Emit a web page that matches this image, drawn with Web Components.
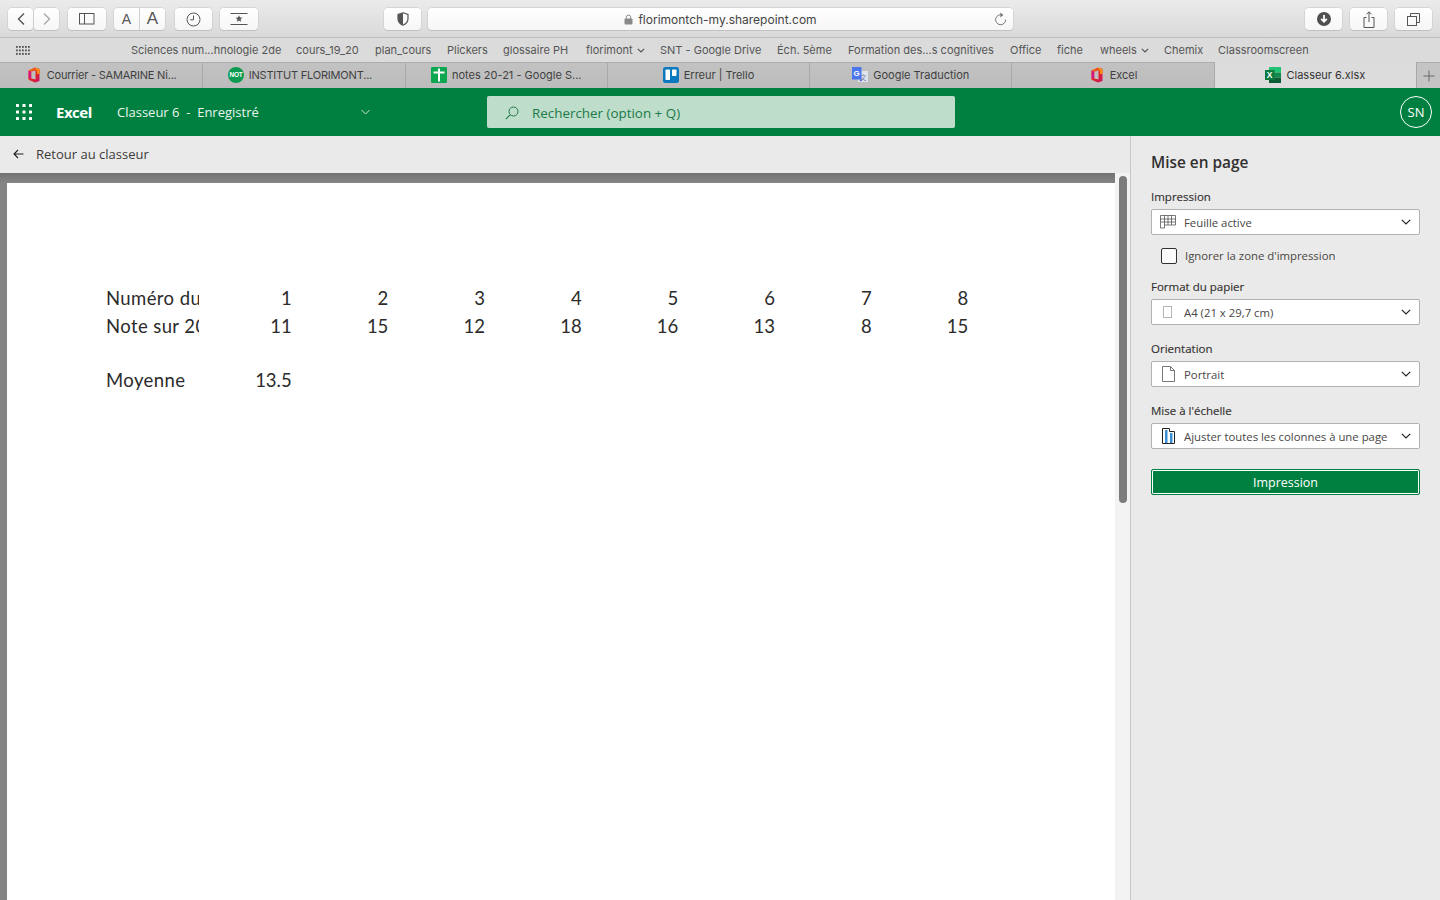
<!DOCTYPE html>
<html lang="fr">
<head>
<meta charset="utf-8">
<title>Classeur 6.xlsx</title>
<style>
html, body { margin: 0; height: 100%; overflow: hidden; background: #ebeaea; }
body { display: flex; flex-direction: column; width: 1440px; height: 900px; }
</style>
</head>
<body>
<safari-toolbar></safari-toolbar>
<bookmark-bar></bookmark-bar>
<tab-strip>
    <browser-tab icon="office" tight>Courrier - SAMARINE Ni...</browser-tab>
    <browser-tab icon="not" tight style="padding-right:8px">INSTITUT FLORIMONT...</browser-tab>
    <browser-tab icon="sheets">notes 20-21 - Google S...</browser-tab>
    <browser-tab icon="trello">Erreur | Trello</browser-tab>
    <browser-tab icon="translate">Google Traduction</browser-tab>
    <browser-tab icon="office">Excel</browser-tab>
    <browser-tab icon="excel" active>Classeur 6.xlsx</browser-tab>
</tab-strip>
<excel-header></excel-header>
<print-view>
    <print-preview></print-preview>
    <layout-panel>
        <panel-select label="Impression" icon="grid">Feuille active</panel-select>
        <panel-check>Ignorer la zone d'impression</panel-check>
        <panel-select label="Format du papier" icon="paper">A4 (21 x 29,7 cm)</panel-select>
        <panel-select label="Orientation" icon="portrait">Portrait</panel-select>
        <panel-select label="Mise à l'échelle" icon="fit">Ajuster toutes les colonnes à une page</panel-select>
    </layout-panel>
</print-view>

<script>
const UI_FONT = '"Open Sans", "Noto Sans", sans-serif';
const MAC_FONT = 'Inter, "Liberation Sans", sans-serif';

class SafariToolbar extends HTMLElement {
    constructor() {
        super();
        this.attachShadow({ mode: 'open' });
    }

    connectedCallback() {
        this.shadowRoot.innerHTML = `
        <style>
        :host {
            display: flex;
            align-items: flex-start;
            box-sizing: border-box;
            height: 38px;
            padding: 8px 8px 0;
            background: linear-gradient(#ebebeb, #d9d9d9);
            border-bottom: 1px solid #bdbdbd;
            font-family: ${MAC_FONT};
        }
        .btn {
            display: flex;
            justify-content: center;
            align-items: center;
            box-sizing: border-box;
            height: 22px;
            background: linear-gradient(#ffffff, #f6f6f6);
            border-radius: 4px;
            box-shadow: 0 0 0 0.5px #c6c6c6, 0 1px 0 #bcbcbc;
            color: #555;
        }
        svg { display: block; fill: none; stroke: #555; }
        .a-small, .a-big { font-family: "Liberation Sans", sans-serif; color: #555; line-height: 22px; text-align: center; flex: 1; }
        .a-small { font-size: 14px; border-right: 1px solid #d0d0d0; }
        .a-big { font-size: 17px; }
        .address {
            position: relative;
            justify-content: center;
            width: 585px;
            margin-left: 7px;
            font-size: 12px;
            color: #444;
            gap: 5px;
        }
        .reload { position: absolute; right: 6px; top: 4px; }
        </style>
        <div class="btn" style="width:25px"><svg width="10" height="14" viewBox="0 0 10 14"><path d="M8 1.500 2.500 7 8 12.500" stroke-width="1.400"/></svg></div>
        <div class="btn" style="width:25px;margin-left:1px"><svg width="10" height="14" viewBox="0 0 10 14"><path d="M2 1.500 7.500 7 2 12.500" stroke="#a8a8a8" stroke-width="1.400"/></svg></div>
        <div class="btn" style="width:38px;margin-left:9px"><svg width="16" height="12" viewBox="0 0 16 12"><rect x=".5" y=".5" width="14.500" height="10.500"/><path d="M5.500 .5v10.500"/></svg></div>
        <div class="btn" style="width:51px;margin-left:8px"><span class="a-small">A</span><span class="a-big">A</span></div>
        <div class="btn" style="width:37px;margin-left:10px"><svg width="15" height="15" viewBox="0 0 15 15"><circle cx="7.500" cy="7.500" r="6.500"/><path d="M7.500 3.500v4.300H4.200"/></svg></div>
        <div class="btn" style="width:38px;margin-left:8px"><svg width="18" height="12" viewBox="0 0 18 12"><path d="M.5 .5h17M.5 11.500h17"/><path d="m9 2.200 1 2.300 2.500.2-1.900 1.600.6 2.400L9 7.500 6.800 8.700l.6-2.400-1.900-1.600L8 4.500Z" fill="#555" stroke="none"/></svg></div>
        <div class="btn" style="width:37px;margin-left:126px"><svg width="12" height="14" viewBox="0 0 12 14"><path d="M6 .8 11 2.500v4c0 3.200-2 5.500-5 6.800C3 12 1 9.700 1 6.500v-4Z" stroke-width="1.200"/><path d="M6 .8v12.500C3 12 1 9.700 1 6.500v-4Z" fill="#555" stroke="none"/></svg></div>
        <div class="btn address">
            <svg width="9" height="11" viewBox="0 0 9 11"><path d="M2.300 5V3.300a2.200 2.200 0 0 1 4.400 0V5" stroke="#8a8a8a"/><rect x=".5" y="4.500" width="8" height="6" rx="1" fill="#8a8a8a" stroke="none"/></svg>
            <span>florimontch-my.sharepoint.com</span>
            <svg class="reload" width="13" height="14" viewBox="0 0 13 14"><path d="M8.500 3.100A5 5 0 1 0 11.600 7.500" stroke="#777"/><path d="M6.300 .6 9.300 3 6.300 5.400Z" fill="#777" stroke="none"/></svg>
        </div>
        <div class="btn" style="width:37px;margin-left:292px"><svg width="14" height="14" viewBox="0 0 14 14"><circle cx="7" cy="7" r="7" fill="#4f4f4f" stroke="none"/><path d="M7 3v5.500M4.200 6.800 7 9.800l2.800-3" stroke="#fff" stroke-width="1.800"/></svg></div>
        <div class="btn" style="width:37px;margin-left:8px"><svg width="12" height="17" viewBox="0 0 12 17"><path d="M3.500 6.500H1v10h10v-10H8.500M6 11V1M3.500 3.300 6 .8l2.500 2.500"/></svg></div>
        <div class="btn" style="width:37px;margin-left:8px"><svg width="13" height="13" viewBox="0 0 13 13"><rect x=".5" y="3.500" width="9" height="9"/><path d="M3.500 3.500v-3h9v9h-3"/></svg></div>
        `;
    }
}

class BookmarkBar extends HTMLElement {
    constructor() {
        super();
        this.attachShadow({ mode: 'open' });
    }

    connectedCallback() {
        const items = [
            ['Sciences num...hnologie 2de', 131], ['cours_19_20', 296], ['plan_cours', 375],
            ['Plickers', 447], ['glossaire PH', 503], ['florimont', 586, true],
            ['SNT - Google Drive', 660], ['Éch. 5ème', 777], ['Formation des...s cognitives', 848],
            ['Office', 1010], ['fiche', 1057], ['wheels', 1100, true], ['Chemix', 1164], ['Classroomscreen', 1218]
        ];
        const links = items.map(([name, x, menu], i) => {
            const next = items[i + 1] ? items[i + 1][1] : x + 100;
            const chevron = menu ? '<svg width="8" height="5" viewBox="0 0 8 5"><path d="M.8 .8 4 4 7.200 .8" fill="none" stroke="#555" stroke-width="1.200"/></svg>' : '';
            return `<a style="width:${next - x}px">${name}${chevron}</a>`;
        }).join('');
        let dots = '';
        for (let r = 0; r < 3; r++) {
            for (let c = 0; c < 5; c++) {
                dots += `<rect x="${c * 3}" y="${r * 3.500}" width="1.800" height="1.800"/>`;
            }
        }
        this.shadowRoot.innerHTML = `
        <style>
        :host {
            display: flex;
            align-items: center;
            box-sizing: border-box;
            height: 24px;
            padding-left: 16px;
            background: #dbdbdb;
            font: 11px ${MAC_FONT};
            color: #555;
            white-space: nowrap;
        }
        .apps { width: 115px; flex: none; fill: #555; }
        a { display: flex; align-items: center; gap: 4px; flex: none; }
        </style>
        <svg class="apps" height="9" viewBox="0 0 115 9" preserveAspectRatio="xMinYMid meet">${dots}</svg>
        ${links}
        `;
    }
}

class TabStrip extends HTMLElement {
    constructor() {
        super();
        this.attachShadow({ mode: 'open' });
    }

    connectedCallback() {
        this.shadowRoot.innerHTML = `
        <style>
        :host {
            display: flex;
            box-sizing: border-box;
            height: 26px;
            background: #bfbfbf;
            border-top: 1px solid #adadad;
        }
        .tabs { display: grid; grid-template-columns: repeat(7, 1fr); width: 1416px; }
        .plus {
            flex: 1;
            display: flex;
            align-items: center;
            justify-content: center;
            background: #c4c4c4;
            border-left: 1px solid #a9a9a9;
        }
        </style>
        <div class="tabs"><slot></slot></div>
        <div class="plus"><svg width="12" height="12" viewBox="0 0 12 12"><path d="M6 .5v11M.5 6h11" stroke="#6a6a6a" fill="none"/></svg></div>
        `;
    }
}

const FAVICONS = {
    office: `<svg width="16" height="16" viewBox="0 0 16 16"><defs><linearGradient id="o" x1="0" y1="0" x2="1" y2="1"><stop offset="0" stop-color="#f7941d"/><stop offset=".5" stop-color="#e3231f"/><stop offset="1" stop-color="#c81270"/></linearGradient></defs><path d="M2.500 3.300 9 .5l4.500 1.500v12L9 15.500 2.500 12.800Z M5.200 4.700v6.800L9.500 12.500V3.600Z" fill="url(#o)" fill-rule="evenodd"/><path d="M9.500 .7 13.500 2v5H11V3.300L9.500 3.600Z" fill="#f98e12"/><path d="M2.500 3.300 5.200 4.700v6.800H2.500Z" fill="#d6177d"/></svg>`,
    not: `<svg width="16" height="16" viewBox="0 0 16 16"><circle cx="8" cy="8" r="8" fill="#0b9a4f"/><text x="8" y="10.300" font-size="6.500" font-weight="700" text-anchor="middle" fill="#fff" font-family="Liberation Sans">NOT</text></svg>`,
    sheets: `<svg width="16" height="16" viewBox="0 0 16 16"><rect width="16" height="16" rx="1" fill="#0ca750"/><path d="M2.500 4.500h11v2h-4.500v8h-2v-8h-4.500Z M7 1.500h2v3h-2Z" fill="#fff"/></svg>`,
    trello: `<svg width="16" height="16" viewBox="0 0 16 16"><rect width="16" height="16" rx="2.500" fill="#0a79bf"/><rect x="2.500" y="2.500" width="4.500" height="10.500" rx=".7" fill="#fff"/><rect x="9" y="2.500" width="4.500" height="6.500" rx=".7" fill="#fff"/></svg>`,
    translate: `<svg width="16" height="16" viewBox="0 0 16 16"><rect x="6" y="4" width="10" height="11" fill="#dfe3ea"/><text x="11" y="12.500" font-size="7" text-anchor="middle" fill="#7c8aa8" font-family="Noto Sans CJK SC">文</text><path d="M0 0h9.500v12.500H0Z" fill="#4a76ee"/><path d="M7.500 12.500h3l-2 2Z" fill="#3b4fc8"/><text x="4.700" y="9" font-size="8" font-weight="700" text-anchor="middle" fill="#fff" font-family="Liberation Sans">G</text></svg>`,
    excel: `<svg width="16" height="16" viewBox="0 0 16 16"><rect x="4" y="0" width="12" height="5.500" fill="#21c372"/><rect x="4" y="5.500" width="12" height="5" fill="#0f8a4a"/><rect x="4" y="10.500" width="12" height="5.500" fill="#0b5e33"/><rect x="0" y="3" width="9.500" height="10" fill="#0b7a3e"/><text x="4.700" y="11" font-size="8.500" font-weight="700" text-anchor="middle" fill="#fff" font-family="Liberation Sans">X</text></svg>`
};

class BrowserTab extends HTMLElement {
    constructor() {
        super();
        this.attachShadow({ mode: 'open' });
    }

    connectedCallback() {
        this.shadowRoot.innerHTML = `
        <style>
        :host {
            display: flex;
            justify-content: center;
            align-items: center;
            gap: 5px;
            box-sizing: border-box;
            min-width: 0;
            padding-bottom: 1px;
            background: linear-gradient(#c2c2c2, #bcbcbc);
            border-left: 1px solid #a9a9a9;
            font: 11px ${MAC_FONT};
            color: #3f3f3f;
            white-space: nowrap;
        }
        :host(:first-child) { border-left: 0; }
        :host([tight]) { letter-spacing: -0.2px; }
        :host([active]) {
            background: #dcdcdc;
            color: #333;
            margin-top: -1px;
        }
        svg { display: block; flex: none; }
        </style>
        ${FAVICONS[this.getAttribute('icon')]}
        <slot></slot>
        `;
    }
}

class ExcelHeader extends HTMLElement {
    constructor() {
        super();
        this.attachShadow({ mode: 'open' });
    }

    connectedCallback() {
        let dots = '';
        for (let r = 0; r < 3; r++) {
            for (let c = 0; c < 3; c++) {
                dots += `<rect x="${c * 6.500}" y="${r * 6.500}" width="3" height="3" rx=".5"/>`;
            }
        }
        this.shadowRoot.innerHTML = `
        <style>
        :host {
            display: flex;
            align-items: center;
            flex: none;
            box-sizing: border-box;
            height: 48px;
            padding-left: 16px;
            background: #008040;
            color: #fff;
            font-family: ${UI_FONT};
        }
        .waffle { fill: #fff; flex: none; }
        .brand { margin-left: 24px; font-size: 15px; font-weight: 700; letter-spacing: -0.5px; width: 61px; flex: none; }
        .doc { font-size: 13px; width: 244px; flex: none; white-space: pre; color: #eaf5ee; }
        .chev { flex: none; }
        .search {
            display: flex;
            align-items: center;
            box-sizing: border-box;
            width: 468px;
            height: 32px;
            margin-left: 117px;
            padding: 1px 0 0 18px;
            gap: 13px;
            background: #bfddcb;
            border-radius: 2px;
            color: #1a7a48;
            font-size: 13.400px;
        }
        .avatar {
            display: flex;
            justify-content: center;
            align-items: center;
            box-sizing: border-box;
            width: 32px;
            height: 32px;
            margin-left: auto;
            margin-right: 8px;
            border: 1px solid #fff;
            border-radius: 50%;
            font-size: 13px;
        }
        </style>
        <svg class="waffle" width="16" height="16" viewBox="0 0 16 16">${dots}</svg>
        <span class="brand">Excel</span>
        <span class="doc">Classeur 6  -  Enregistré</span>
        <svg class="chev" width="9" height="6" viewBox="0 0 9 6"><path d="M.5 1 4.500 5 8.500 1" fill="none" stroke="#cfe6d8"/></svg>
        <div class="search">
            <svg width="14" height="14" viewBox="0 0 14 14"><circle cx="8.500" cy="5.500" r="4.500" fill="none" stroke="#1f7a4a"/><path d="M5.200 8.800 .8 13.200" stroke="#1f7a4a" stroke-width="1.100"/></svg>
            <span>Rechercher (option + Q)</span>
        </div>
        <div class="avatar">SN</div>
        `;
    }
}

class PrintView extends HTMLElement {
    constructor() {
        super();
        this.attachShadow({ mode: 'open' });
    }

    connectedCallback() {
        this.shadowRoot.innerHTML = `
        <style>
        :host { display: flex; flex: 1; min-height: 0; }
        </style>
        <slot></slot>
        `;
    }
}

class PrintPreview extends HTMLElement {
    constructor() {
        super();
        this.attachShadow({ mode: 'open' });
    }

    connectedCallback() {
        const numbers = [1, 2, 3, 4, 5, 6, 7, 8];
        const notes = [11, 15, 12, 18, 16, 13, 8, 15];
        const cells = (list) => list.map((v) => `<span class="num">${v}</span>`).join('');
        this.shadowRoot.innerHTML = `
        <style>
        :host {
            display: flex;
            flex-direction: column;
            box-sizing: border-box;
            width: 1131px;
            flex: none;
            border-right: 1px solid #c9c8c7;
            background: #ebeaea;
        }
        .back {
            display: flex;
            align-items: center;
            gap: 12px;
            box-sizing: border-box;
            height: 37px;
            flex: none;
            padding: 0 0 2px 13px;
            font: 13px ${UI_FONT};
            color: #3b3a39;
        }
        .stage { display: flex; flex: 1; min-height: 0; }
        .frame {
            flex: none;
            width: 1115px;
            box-sizing: border-box;
            padding: 10px 0 0 7px;
            background: #7f7f7f;
            background-image: linear-gradient(#737373, #848484 10px);
            overflow: hidden;
        }
        .sheet {
            height: 100%;
            background: #fff;
            padding: 101px 0 0 99px;
            box-sizing: border-box;
            font: 18.500px Lato, Carlito, sans-serif;
            color: #2b2b2b;
        }
        .row {
            display: grid;
            grid-template-columns: 93px 92.700px repeat(7, 96.670px);
            height: 28px;
            line-height: 28px;
        }
        .label { overflow: hidden; white-space: nowrap; letter-spacing: 0.4px; }
        .num { text-align: right; }
        .track { flex: 1; background: #f3f3f3; padding: 3px 3px 0 4px; box-sizing: border-box; }
        .thumb { height: 327px; background: #7c7c7c; border-radius: 4px; }
        </style>
        <div class="back">
            <svg width="11" height="10" viewBox="0 0 11 10"><path d="M10.500 5H1M5 1 1 5l4 4" fill="none" stroke="#201f1e" stroke-width="1.100"/></svg>
            <span>Retour au classeur</span>
        </div>
        <div class="stage">
            <div class="frame">
                <div class="sheet">
                    <div class="row"><span class="label">Numéro du</span>${cells(numbers)}</div>
                    <div class="row"><span class="label">Note sur 20</span>${cells(notes)}</div>
                    <div class="row" style="height:26px"></div>
                    <div class="row"><span class="label">Moyenne</span><span class="num">13.5</span></div>
                </div>
            </div>
            <div class="track"><div class="thumb"></div></div>
        </div>
        `;
    }
}

class LayoutPanel extends HTMLElement {
    constructor() {
        super();
        this.attachShadow({ mode: 'open' });
    }

    connectedCallback() {
        this.shadowRoot.innerHTML = `
        <style>
        :host {
            display: block;
            flex: 1;
            box-sizing: border-box;
            padding: 16px 20px 0 20px;
            background: #ebeaea;
            font-family: ${UI_FONT};
            color: #323130;
        }
        h2 { margin: 0 0 15px; font-size: 15.400px; line-height: 22px; font-weight: 600; }
        button {
            display: block;
            box-sizing: border-box;
            width: 100%;
            height: 26px;
            margin-top: 20px;
            padding: 0;
            background: #008040;
            border: 1px solid #008040;
            border-radius: 2px;
            box-shadow: inset 0 0 0 1px #fff;
            color: #fff;
            font: 12.500px ${UI_FONT};
        }
        </style>
        <h2>Mise en page</h2>
        <slot></slot>
        <button type="button">Impression</button>
        `;
    }
}

const SELECT_ICONS = {
    grid: `<svg width="16" height="14" viewBox="0 0 16 14"><path d="M.5 .5h15v9.500h-11V13H.5ZM.5 4h15M.5 7h15M4.500 .5V10M8 .5V10M11.500 .5V10" fill="none" stroke="#555" stroke-width=".8"/></svg>`,
    paper: `<svg width="10" height="13" viewBox="0 0 10 13"><rect x=".5" y=".5" width="8" height="11" fill="#fff" stroke="#b5b5b5"/></svg>`,
    portrait: `<svg width="13" height="16" viewBox="0 0 13 16"><path d="M.5 .5h8l4 4v11H.5Z M8.500 .5v4h4" fill="#fff" stroke="#777"/></svg>`,
    fit: `<svg width="13" height="16" viewBox="0 0 13 16"><path d="M.5 .5h7v3h5v12H.5Z" fill="#fff" stroke="#222"/><rect x="3" y="2" width="2.500" height="13" fill="#3b8fd4"/><rect x="8" y="5" width="2.500" height="10" fill="#3b8fd4"/></svg>`
};

class PanelSelect extends HTMLElement {
    constructor() {
        super();
        this.attachShadow({ mode: 'open' });
    }

    connectedCallback() {
        this.shadowRoot.innerHTML = `
        <style>
        :host { display: block; margin-bottom: 16px; }
        label { display: block; height: 20px; line-height: 16px; font-size: 11.500px; color: #323130; -webkit-text-stroke: 0.15px #323130; }
        .box {
            display: flex;
            align-items: center;
            box-sizing: border-box;
            height: 26px;
            background: #fff;
            border: 1px solid #b3b0ad;
            border-radius: 2px;
            font-size: 11.350px;
            color: #484644;
        }
        .icon { display: flex; justify-content: center; width: 32px; flex: none; }
        .text { flex: 1; white-space: nowrap; }
        .chev { margin-right: 8px; flex: none; }
        </style>
        <label>${this.getAttribute('label')}</label>
        <div class="box">
            <span class="icon">${SELECT_ICONS[this.getAttribute('icon')]}</span>
            <span class="text"><slot></slot></span>
            <svg class="chev" width="10" height="6" viewBox="0 0 10 6"><path d="M.8 .8 5 5 9.200 .8" fill="none" stroke="#222" stroke-width="1.200"/></svg>
        </div>
        `;
    }
}

class PanelCheck extends HTMLElement {
    constructor() {
        super();
        this.attachShadow({ mode: 'open' });
    }

    connectedCallback() {
        this.shadowRoot.innerHTML = `
        <style>
        :host {
            display: flex;
            align-items: center;
            gap: 8px;
            height: 16px;
            margin: -3px 0 15px 10px;
            font-size: 11.350px;
            color: #484644;
        }
        .box { width: 16px; height: 16px; box-sizing: border-box; border: 1px solid #323130; border-radius: 2px; background: #fbfbfb; }
        .text { margin-top: -2px; }
        </style>
        <span class="box"></span>
        <span class="text"><slot></slot></span>
        `;
    }
}

customElements.define('safari-toolbar', SafariToolbar);
customElements.define('bookmark-bar', BookmarkBar);
customElements.define('tab-strip', TabStrip);
customElements.define('browser-tab', BrowserTab);
customElements.define('excel-header', ExcelHeader);
customElements.define('print-view', PrintView);
customElements.define('print-preview', PrintPreview);
customElements.define('layout-panel', LayoutPanel);
customElements.define('panel-select', PanelSelect);
customElements.define('panel-check', PanelCheck);
</script>
</body>
</html>
